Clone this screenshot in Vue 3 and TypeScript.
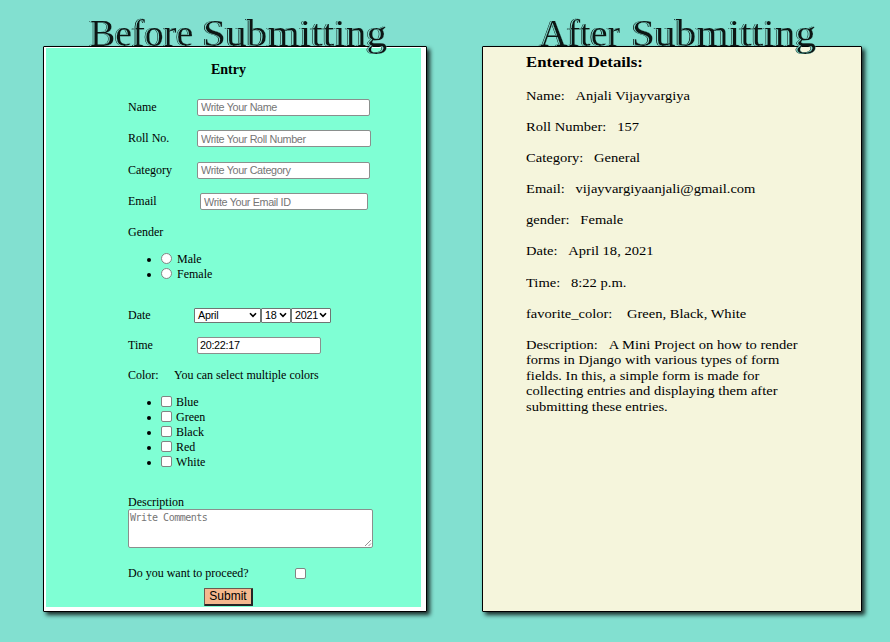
<script setup lang="ts">
interface TextField {
  id: string
  label: string
  hint: string
}

interface Detail {
  label: string
  value: string
  wide?: boolean
}

const textFields: TextField[] = [
  { id: 'name', label: 'Name', hint: 'Write Your Name' },
  { id: 'roll', label: 'Roll No.', hint: 'Write Your Roll Number' },
  { id: 'category', label: 'Category', hint: 'Write Your Category' },
  { id: 'email', label: 'Email', hint: 'Write Your Email ID' },
]

const genders: string[] = ['Male', 'Female']
const colors: string[] = ['Blue', 'Green', 'Black', 'Red', 'White']
const dateParts = [
  { id: 'month', value: 'April' },
  { id: 'day', value: '18' },
  { id: 'year', value: '2021' },
]

const details: Detail[] = [
  { label: 'Name:', value: 'Anjali Vijayvargiya' },
  { label: 'Roll Number:', value: '157' },
  { label: 'Category:', value: 'General' },
  { label: 'Email:', value: 'vijayvargiyaanjali@gmail.com' },
  { label: 'gender:', value: 'Female' },
  { label: 'Date:', value: 'April 18, 2021' },
  { label: 'Time:', value: '8:22 p.m.' },
  { label: 'favorite_color:', value: 'Green, Black, White', wide: true },
]

const descriptionLines: string[] = [
  'forms in Django with various types of form',
  'fields. In this, a simple form is made for',
  'collecting entries and displaying them after',
  'submitting these entries.',
]
</script>

<template>
  <main class="page">
    <section class="panel before">
      <h1 class="title"><span class="first">Before</span><span class="second">Submitting</span></h1>
      <div class="card form-card">
        <form class="form" @submit.prevent>
          <h2 class="heading">Entry</h2>
          <div v-for="f in textFields" :key="f.id" class="row text-row">
            <label class="label" :for="f.id">{{ f.label }}</label>
            <input :id="f.id" class="input" :class="f.id" type="text" :placeholder="f.hint" />
          </div>
          <div class="row gender-row">Gender</div>
          <ul class="list genders">
            <li v-for="g in genders" :key="g">
              <label><input class="radio" type="radio" name="gender" />{{ g }}</label>
            </li>
          </ul>
          <div class="row date-row">
            <span class="label">Date</span>
            <span v-for="p in dateParts" :key="p.id" class="select" :class="p.id">
              {{ p.value }}
              <svg width="8" height="6" viewBox="0 0 8 6"><path d="M1 1.2 4 4.3 7 1.2" /></svg>
            </span>
          </div>
          <div class="row time-row">
            <label class="label" for="time">Time</label>
            <input id="time" class="input time" type="text" value="20:22:17" />
          </div>
          <div class="row color-row"><span class="color-label">Color:</span>You can select multiple colors</div>
          <ul class="list colors">
            <li v-for="c in colors" :key="c">
              <label><input class="check" type="checkbox" />{{ c }}</label>
            </li>
          </ul>
          <label class="description-label" for="description">Description</label>
          <div class="area">
            <textarea id="description" placeholder="Write Comments"></textarea>
            <svg class="grip" width="8" height="8" viewBox="0 0 8 8"><path d="M1 7 7 1M4.5 7 7 4.5" /></svg>
          </div>
          <label class="row proceed"><span class="question">Do you want to proceed?</span><input class="check" type="checkbox" /></label>
          <button class="submit" type="submit">Submit</button>
        </form>
      </div>
    </section>

    <section class="panel after">
      <h1 class="title"><span class="first">After</span><span class="second">Submitting</span></h1>
      <div class="card details-card">
        <div class="details">
          <h2 class="details-heading">Entered Details:</h2>
          <p v-for="d in details" :key="d.label" class="detail">
            <span class="key" :class="{ wide: d.wide }">{{ d.label }}</span>{{ d.value }}
          </p>
          <p class="detail">
            <span class="key">Description:</span>A Mini Project on how to render
            <template v-for="line in descriptionLines" :key="line"><br />{{ line }}</template>
          </p>
        </div>
      </div>
    </section>
  </main>
</template>

<style>
body {
  background: #82e0d0;
}
</style>

<style scoped>
* {
  box-sizing: border-box;
}

.page {
  display: flex;
  align-items: flex-start;
  gap: 55px;
  width: 890px;
  height: 642px;
  padding: 10px 0 0 43px;
  overflow: hidden;
  background: #82e0d0;
  color: #000;
  font-family: 'Liberation Serif', serif;
}

.panel {
  display: flex;
  flex-direction: column;
}

.before {
  width: 384px;
}

.after {
  width: 380px;
}

.title {
  position: relative;
  z-index: 1;
  display: flex;
  height: 36px;
  margin: 0;
  font-size: 38px;
  font-weight: 400;
  line-height: 46px;
  white-space: nowrap;
  color: #0b1412;
  opacity: 0.99;
  will-change: transform;
  -webkit-text-stroke: 0.2px #82e0d0;
  text-shadow: -1px 0 0 #82e0d0, -1.6px 0 0 #000;
}

.before .title {
  padding-left: 47px;
}

.after .title {
  padding-left: 58px;
}

.first {
  width: 113px;
}

.after .first {
  width: 92px;
}

.second {
  transform: scaleX(1.09);
  transform-origin: left top;
}

.card {
  height: 566px;
  border: 1px solid #000;
  border-radius: 1px;
  box-shadow: 3px 3px 4px rgba(0, 0, 0, 0.8);
}

.form-card {
  padding: 1px 5px 4px 2px;
  background: #fff;
}

.form {
  display: flex;
  flex-direction: column;
  width: 375px;
  height: 559px;
  padding-left: 82px;
  background: #7fffd4;
  font-size: 12px;
  line-height: 15px;
}

.heading {
  width: 201px;
  margin: 13px 0 19.5px;
  font-size: 14px;
  line-height: 18px;
  text-align: center;
}

.row {
  display: flex;
  align-items: center;
  flex-shrink: 0;
}

.text-row {
  height: 17.5px;
  margin-bottom: 14px;
}

.label {
  width: 69px;
}

.input {
  height: 17px;
  padding: 0 0 0 3px;
  border: 1px solid #8a8f8d;
  border-radius: 2px;
  outline: none;
  background: #fff;
  color: #000;
  font: 10.8px 'Liberation Sans', sans-serif;
  letter-spacing: -0.36px;
}

.input::placeholder {
  color: #757575;
  opacity: 1;
}

.name,
.category {
  width: 173px;
}

.roll {
  width: 174px;
}

.email {
  width: 168px;
  margin-left: 3px;
}

.time {
  width: 124px;
  padding-left: 2px;
  letter-spacing: -0.3px;
}

.gender-row {
  height: 15px;
}

.list {
  display: flex;
  flex-direction: column;
  margin: 0;
  padding: 0 0 0 33px;
  list-style: none;
}

.list li {
  position: relative;
  height: 14.8px;
}

.list li::before {
  content: '';
  position: absolute;
  left: -14px;
  top: 6px;
  width: 4px;
  height: 4px;
  border-radius: 50%;
  background: #000;
}

.list label {
  display: flex;
  align-items: center;
  gap: 5px;
  height: 14.8px;
}

.genders {
  margin: 12.5px 0 26px;
}

.radio,
.check {
  appearance: none;
  width: 11px;
  height: 11px;
  margin: 0;
  border: 1px solid #808583;
  background: #fff;
}

.radio {
  border-radius: 50%;
}

.list .radio,
.list .check {
  position: relative;
  top: -1px;
}

.check {
  border-radius: 2px;
}

.colors label {
  gap: 4px;
}

.date-row {
  height: 15px;
}

.date-row .label {
  width: 66px;
}

.select {
  display: flex;
  align-items: center;
  justify-content: space-between;
  height: 15px;
  padding: 0 3px 0 3px;
  border: 1px solid #6f7573;
  border-radius: 1px;
  background: #fff;
  font: 10.8px 'Liberation Sans', sans-serif;
  letter-spacing: -0.25px;
}

.month {
  width: 67px;
}

.day {
  width: 30px;
}

.year {
  width: 40px;
}

.select svg path {
  fill: none;
  stroke: #000;
  stroke-width: 1.6;
}

.time-row {
  height: 17px;
  margin-top: 14px;
}

.color-row {
  height: 15px;
  margin-top: 14.5px;
}

.color-label {
  width: 46px;
}

.colors {
  margin: 12.4px 0 26px;
}

.description-label {
  display: block;
  height: 14px;
}

.area {
  position: relative;
  width: 245px;
  height: 39px;
}

.area textarea {
  display: block;
  width: 100%;
  height: 100%;
  padding: 2px 1px;
  border: 1px solid #8a8f8d;
  border-radius: 2px;
  resize: none;
  background: #fff;
  font: 10px/12px 'DejaVu Sans Mono', monospace;
  letter-spacing: -0.5px;
}

.area textarea::placeholder {
  color: #757575;
}

.grip {
  position: absolute;
  right: 1px;
  bottom: 1px;
}

.grip path {
  fill: none;
  stroke: #777;
  stroke-width: 0.8;
}

.proceed {
  height: 15px;
  margin-top: 18px;
}

.question {
  width: 167px;
}

.submit {
  width: 49px;
  height: 18px;
  margin: 7px 0 0 76px;
  padding: 0;
  border: 1px solid;
  border-width: 1px 2px 2px 1px;
  border-color: #6b5a50 #252525 #252525 #6b5a50;
  border-radius: 1px;
  background: #f4b88e;
  color: #000;
  font: 12px/15px 'Liberation Sans', sans-serif;
}

.details-card {
  padding: 6px 0 0 43px;
  background: #f5f5dc;
}

.details {
  width: 320px;
  font-size: 13.5px;
  line-height: 15.55px;
  white-space: nowrap;
  transform: scaleX(1.077);
  transform-origin: left top;
}

.details-heading {
  margin: 0 0 17px;
  font-size: 15.6px;
  line-height: 18px;
}

.detail {
  margin: 0 0 15.55px;
}

.key {
  margin-right: 10px;
}

.key.wide {
  margin-right: 13.5px;
}
</style>
